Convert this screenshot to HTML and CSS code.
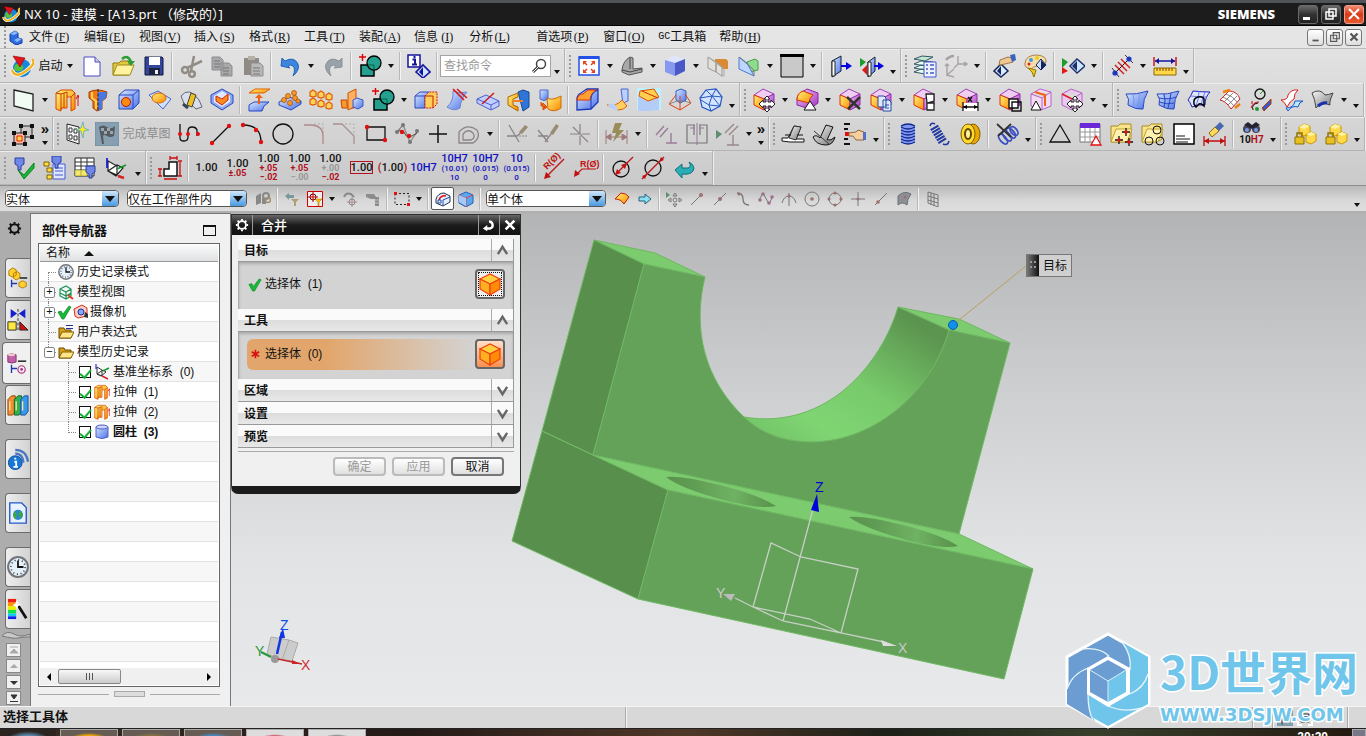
FILE: index.html
```html
<!DOCTYPE html>
<html lang="zh-CN">
<head>
<meta charset="utf-8">
<title>NX 10 - 建模</title>
<link rel="stylesheet" href="styles.css">
</head>
<body>
<svg class="defs" width="0" height="0" aria-hidden="true">
<defs>
<linearGradient id="gb" x1="0" y1="0" x2="1" y2="1"><stop offset="0" stop-color="#dbe9ff"/><stop offset="1" stop-color="#4a72e8"/></linearGradient>
<linearGradient id="go" x1="0" y1="0" x2="1" y2="1"><stop offset="0" stop-color="#fff27a"/><stop offset="1" stop-color="#ff8a00"/></linearGradient>
<linearGradient id="gp" x1="0" y1="0" x2="1" y2="1"><stop offset="0" stop-color="#f3c8f5"/><stop offset="1" stop-color="#a02cc0"/></linearGradient>
<linearGradient id="gg" x1="0" y1="0" x2="1" y2="1"><stop offset="0" stop-color="#f8f8f8"/><stop offset="1" stop-color="#777"/></linearGradient>
<linearGradient id="bore" x1="0" y1="1" x2="1" y2="0"><stop offset="0" stop-color="#6fbf63"/><stop offset=".25" stop-color="#80d573"/><stop offset=".5" stop-color="#78ca6b"/><stop offset=".85" stop-color="#5c954f"/><stop offset="1" stop-color="#5a924d"/></linearGradient>
<linearGradient id="hole" x1="0" x2="1"><stop offset="0" stop-color="#5a924d"/><stop offset=".2" stop-color="#5e9a52"/><stop offset=".62" stop-color="#6fb263"/><stop offset="1" stop-color="#579049"/></linearGradient>
</defs>
<symbol id="launch" viewBox="0 0 24 24"><circle cx="12" cy="14" r="9" fill="#1688dc"/><path d="M5 11q4-3 7 0t-1 6q-5 1-7-2z" fill="#55c33a"/><path d="M2 16q3 9 14 1t6-12" fill="none" stroke="#fff" stroke-width="4"/><path d="M2 16q3 9 14 1t6-12" fill="none" stroke="#f2b21d" stroke-width="2.4"/><path d="M3 2l12 2-5 9z" fill="#e2151c" stroke="#900" stroke-width=".6"/></symbol>
<symbol id="new" viewBox="0 0 24 24"><path d="M4 3h11l5 5v14H4z" fill="#fff" stroke="#4a4ac8"/><path d="M15 3v5h5" fill="#ccd" stroke="#4a4ac8"/></symbol>
<symbol id="open" viewBox="0 0 24 24"><path d="M2 9h6l2-2h8v14H2z" fill="#e3c93c" stroke="#8c7a10"/><path d="M2 21l4-10h17l-4 10z" fill="#fff3a0" stroke="#a08a1a"/><path d="M11 5q6-5 9 3" fill="none" stroke="#2c9c34" stroke-width="2.5"/><path d="M16 7h8l-4 5z" fill="#2c9c34"/></symbol>
<symbol id="save" viewBox="0 0 24 24"><path d="M3 3h17l1 1v17H3z" fill="#34459c" stroke="#10183c"/><path d="M7 3h11v8H7z" fill="#fff"/><path d="M7 14h11v7H7z" fill="#1b2240"/><path d="M13 16h3v4h-3z" fill="#eee"/></symbol>
<symbol id="cut" viewBox="0 0 24 24"><g fill="none" stroke="#928d84" stroke-width="2.5"><circle cx="6" cy="16" r="3"/><circle cx="13" cy="20" r="2.8"/><path d="M12 17L15 2M8 14l15-7"/></g></symbol>
<symbol id="copy" viewBox="0 0 24 24"><path d="M2 3h8l3 3v10H2zM11 9h8l3 3v10H11z" fill="#a9a8aa" stroke="#8d8b90"/><path d="M4 7h6M4 10h6M4 13h6M13 14h6M13 17h6M13 20h6" stroke="#777"/></symbol>
<symbol id="paste" viewBox="0 0 24 24"><path d="M3 4h15v17H3z" fill="#8f8b84"/><path d="M7 2h7v4H7z" fill="#b5b1a9"/><path d="M10 9h9l3 3v10H10z" fill="#b9b8b8" stroke="#8d8b90"/><path d="M12 14h7M12 17h7M12 20h7" stroke="#777"/></symbol>
<symbol id="undo" viewBox="0 0 24 24"><path d="M3 12l1-8 3 3q9-5 13 3 2 6-5 12 3-7 0-10-3-2-5 0l2 2z" fill="#3d86e0" stroke="#2463b5"/></symbol>
<symbol id="redo" viewBox="0 0 24 24"><path d="M21 13l0-9-3 3q-9-5-13 3-2 6 5 12-3-7 0-10 3-2 5 0l-2 2z" fill="#98a2a8" stroke="#8a9398"/></symbol>
<symbol id="bool" viewBox="0 0 24 24"><path d="M3 11h13v11H3z" fill="#24a08e" stroke="#000" stroke-width="1.5"/><circle cx="16" cy="9" r="7" fill="#24a08e" stroke="#000" stroke-width="1.3"/><path d="M10 11h6v5" fill="none" stroke="#064"/><path d="M1 3h7M4.500 0v7" stroke="#e00000" stroke-width="1.4"/></symbol>
<symbol id="info" viewBox="0 0 24 24"><path d="M1 1h12v12H1z" fill="#fff" stroke="#14149c" stroke-width="1.5"/><path d="M5.500 5.500H8V10M5 10.500h5M6.500 3h2" stroke="#14149c" stroke-width="2" fill="none"/><path d="M9 18l7-7 7 7-7 6z" fill="#cfe6ff" stroke="#14149c" stroke-width="1.6"/><path d="M16 13v9l-4-4z" fill="#14149c"/></symbol>
<symbol id="fit" viewBox="0 0 24 24"><path d="M2 3h20v18H2z" fill="#fff" stroke="#2350e8" stroke-width="1.500"/><path d="M2 2h20v3H2z" fill="#2350e8"/><path d="M7 8l3 3M17 8l-3 3M7 18l3-3M17 18l-3-3" stroke="#e8401c" stroke-width="1.500"/><g fill="#e8401c"><path d="M6 7h4l-4 4zM18 7h-4l4 4zM6 19h4l-4-4zM18 19h-4l4-4z"/></g></symbol>
<symbol id="persp" viewBox="0 0 24 24"><path d="M2 16q1-9 8-13l3 1v11l9-1v4l-13 3-7-3z" fill="#a8a8a8" stroke="#555"/><path d="M2 16l8 2 12-3M10 4v11" stroke="#444" fill="none"/></symbol>
<symbol id="cubeb" viewBox="0 0 24 24"><path d="M2 6l9-4 11 3-10 4z" fill="#dfe6ff"/><path d="M2 6l10 3v13L2 18z" fill="#8799ee"/><path d="M12 9l10-4v12l-10 5z" fill="#4a58c8"/></symbol>
<symbol id="clipo" viewBox="0 0 24 24"><path d="M9 5h11l2 2v8H9z" fill="#d98b34"/><path d="M2 3l8 5v10l-8-4zM10 8l6 5v9l-6-4z" fill="#e4e0da" stroke="#999"/><path d="M2 3l16 12v7h-3" fill="none" stroke="#aaa"/></symbol>
<symbol id="clipg" viewBox="0 0 24 24"><path d="M10 8l8-3 3 2v9l-8 2z" fill="#8fdc8f" stroke="#4a9c4a"/><path d="M2 3l8 6 7 13-15-7z" fill="#bcd6ff" stroke="#4a7bd0"/><path d="M2 3l15 13v6" fill="none" stroke="#777"/></symbol>
<symbol id="bgwin" viewBox="0 0 24 24"><path d="M1 1h22v22H1z" fill="#c9c9c9" stroke="#000"/><path d="M0 0h24v3H0z" fill="#000"/></symbol>
<symbol id="show" viewBox="0 0 24 24"><path d="M3 7l9-5v15l-9 6z" fill="url(#gb)" stroke="#123"/><path d="M3 7h3v15H3z" fill="#fff" stroke="#222"/><path d="M12 12h6" stroke="#0000e0" stroke-width="2"/><path d="M17 8l6 4-6 4z" fill="#0000e0"/></symbol>
<symbol id="showh" viewBox="0 0 24 24"><path d="M8 8l7-5v14l-7 6z" fill="url(#gb)" stroke="#123"/><path d="M8 8h3v14H8z" fill="#fff" stroke="#222"/><path d="M14 12h5" stroke="#0000e0" stroke-width="2"/><path d="M18 8l6 4-6 4z" fill="#0000e0"/><path d="M0 4l6 4-6 5z" fill="#1c9c2a"/><path d="M7 11v10l-5-5z" fill="#e01818"/></symbol>
<symbol id="layers" viewBox="0 0 24 24"><g fill="#e8fff0" stroke="#356"><path d="M1 18l7-3 12 1-8 4zM1 14l7-3 12 1-8 4zM1 10l7-3 12 1-8 4z"/><path d="M1 5l8-3 11 1-8 4z" fill="#bfe8cf"/></g><path d="M11 8h12v15H11z" fill="#eef2ff" stroke="#4458d0"/><path d="M13 11h2M13 15h2M13 19h2M17 11h4M17 15h4M17 19h4" stroke="#4458d0" stroke-width="1.500"/></symbol>
<symbol id="csysg" viewBox="0 0 24 24"><g fill="none" stroke="#aaa2a2" stroke-width="1.400"><path d="M14 2v8h9M14 10l-4 4M20 8l3 2-3 2M3 10v11l7-6M3 21l7 2M1 12l2-2 2 2"/><path d="M2 6q3-4 8-4" stroke-width="2.500"/></g></symbol>
<symbol id="objd" viewBox="0 0 24 24"><path d="M1 17l7-7 7 7-7 6z" fill="#d8ecff" stroke="#14245c" stroke-width="1.500"/><path d="M8 12v9l-4-4z" fill="#14245c"/><path d="M7 6l8-3 4 1 1 4-8 2-6 1z" fill="#f0c898" stroke="#a07838"/><path d="M17 1l5-1 1 6-4 2z" fill="#3464c0"/></symbol>
<symbol id="palette" viewBox="0 0 24 24"><path d="M1 9q1-8 12-8 10 1 9 7-3 6-9 4-4 1-6 3-7-1-6-6z" fill="#f7dcaa" stroke="#a8824a"/><circle cx="7" cy="6" r="2" fill="#3aa0d8"/><circle cx="13" cy="4" r="2" fill="#e8d020"/><circle cx="5" cy="10" r="1.500" fill="#d22"/><path d="M17 5l5 6-5 5-5-5z" fill="#cfe0ff" stroke="#14245c"/><path d="M17 6v10l5-5z" fill="#14245c"/><path d="M4 14l8 2-2 7-2-5z" fill="#f0cc20" stroke="#907800"/></symbol>
<symbol id="flagd" viewBox="0 0 24 24"><path d="M1 4l6 4-6 6z" fill="#1c9c2a"/><path d="M1 13v7l6-3z" fill="#e01818"/><path d="M9 12l7-7 8 7-8 7z" fill="#cfe6ff" stroke="#1a2f6c" stroke-width="1.400"/><path d="M16 7v10l-5-5z" fill="#1a2f6c"/></symbol>
<symbol id="meas" viewBox="0 0 24 24"><path d="M5 19L19 5" stroke="#111"/><path d="M5 11l9 9M8 8l9 9M11 5l9 9" stroke="#d01818" stroke-width="1.400"/><circle cx="5" cy="19" r="2.600" fill="#1838d8"/><circle cx="19" cy="5" r="2.600" fill="#1838d8"/><path d="M2 14l7 9M15 1l8 8" stroke="#335"/></symbol>
<symbol id="ruler" viewBox="0 0 24 24"><path d="M1 3v9M23 3v9" stroke="#d01818" stroke-width="1.500"/><path d="M2 7h20" stroke="#14149c" stroke-width="1.500"/><path d="M2 7l4-3v6zM22 7l-4-3v6z" fill="#14149c"/><path d="M1 14h22v7H1z" fill="#ffd84a" stroke="#8a6a00"/><path d="M4 14v3M7 14v3M10 14v3M13 14v3M16 14v3M19 14v3" stroke="#804000"/></symbol>
<symbol id="plane" viewBox="0 0 24 24"><path d="M2 2l19 4v17L2 18z" fill="#f2faf4" stroke="#222" stroke-width="1.300"/></symbol>
<symbol id="extr" viewBox="0 0 24 24"><path d="M1 5l5-3h11l3 3v16l-4 2V9h-4v11H6v3l-5-2z" fill="url(#go)" stroke="#d84800"/><path d="M6 6v16M9 5v15M12 9V4M16 9l4-4M1 5l5 1 3-1 3-1" stroke="#c04000" fill="none"/><path d="M23 8v10M21 11l2-4 1 3" stroke="#e01010" fill="none"/></symbol>
<symbol id="rev" viewBox="0 0 24 24"><path d="M3 4q8-4 18 0l-1 6-4 3v8l-5 2-4-3v-7L3 10z" fill="#f07818" stroke="#a83c00"/><path d="M12 4h9l-1 6-4 3v8l-4 2z" fill="#4a78e0"/><path d="M6 4v6l4 3v8" stroke="#ffd050" stroke-width="2" fill="none"/><path d="M12 1v22" stroke="#222" stroke-dasharray="3 1.500"/></symbol>
<symbol id="bhole" viewBox="0 0 24 24"><path d="M2 7l6-5h14v13l-6 6H2z" fill="url(#gb)" stroke="#2848c0"/><path d="M2 7h14v14M16 7l6-5" fill="none" stroke="#2848c0"/><circle cx="9" cy="14" r="4.500" fill="#ff8a10" stroke="#c01800"/></symbol>
<symbol id="emb" viewBox="0 0 24 24"><path d="M1 7l9-4 13 8-8 10z" fill="#cfe0ff" stroke="#4868c8"/><ellipse cx="11" cy="10" rx="7" ry="5" fill="url(#go)" stroke="#e06000"/></symbol>
<symbol id="thin" viewBox="0 0 24 24"><path d="M2 8q8-10 18 4l3 7-6 2q-5-6-11-3z" fill="#d8e0ee" stroke="#667"/><path d="M12 5l5 2-4 12-5-2z" fill="#f0c020" stroke="#444"/><path d="M4 16l5 4" stroke="#345" stroke-width="3"/></symbol>
<symbol id="boxo" viewBox="0 0 24 24"><path d="M1 7l11-6 11 6v8l-11 7-11-7z" fill="#8ea8f0" stroke="#2848c0"/><path d="M4 8l8-5 8 5v6l-8 5-8-5z" fill="#dfe8ff"/><path d="M6 8l6 3 6-5v6l-6 5-6-4z" fill="#ff8a20" stroke="#c82800"/></symbol>
<symbol id="lift" viewBox="0 0 24 24"><path d="M2 5l6-4h15l-6 4z" fill="url(#go)" stroke="#e06000"/><path d="M2 17l5-3h15l-5 4-2 5H2z" fill="url(#gb)" stroke="#2848c0"/><path d="M11 16v-6H8l4-4 4 4h-3v6z" fill="#f06010"/></symbol>
<symbol id="patd" viewBox="0 0 24 24"><path d="M1 14l10-5 12 4v3l-10 6L1 17z" fill="url(#gb)" stroke="#2848c0"/><g fill="#f59a28" stroke="#a84800" stroke-width=".7"><circle cx="6" cy="12" r="2.500"/><circle cx="12" cy="15" r="2.500"/><circle cx="17" cy="10" r="2.500"/><circle cx="10" cy="8" r="2.500"/><circle cx="16" cy="5" r="2.500"/><circle cx="20" cy="13" r="2"/></g></symbol>
<symbol id="patb" viewBox="0 0 24 24"><g fill="#ffd25a" stroke="#e05a00" stroke-width="1.200"><path d="M1 4l3-2 3 2v4l-3 1-3-1zM9 5l3-2 3 2v4l-3 1-3-1zM17 7l3-2 3 2v4l-3 1-3-1zM1 12l3-2 3 2v4l-3 1-3-1zM9 14l3-2 3 2v4l-3 1-3-1zM17 16l3-2 3 2v4l-3 1-3-1z"/></g></symbol>
<symbol id="mir" viewBox="0 0 24 24"><path d="M1 12h6v6l4 1v-6h5l-2 7H2z" fill="#ff9a28" stroke="#c04800"/><path d="M8 5l8-4v17l-8 4z" fill="#ffb060" stroke="#d05000"/><path d="M13 12l4-2 6 2v6l-5 3-5-2z" fill="url(#gb)" stroke="#3858c8"/></symbol>
<symbol id="comb" viewBox="0 0 24 24"><path d="M1 8l5-4h9v12l-4 4H1z" fill="url(#gb)" stroke="#2848c0"/><path d="M1 8h10v12" fill="none" stroke="#2848c0"/><path d="M11 8l4-4h8v12l-4 4h-8z" fill="#ffcf5a" stroke="#d01010" stroke-dasharray="2 1"/><path d="M11 8h8v12" fill="none" stroke="#c02000"/></symbol>
<symbol id="trim" viewBox="0 0 24 24"><path d="M8 3q6 3 14 1-6 6-7 16-6 4-13-1 7-6 6-16z" fill="url(#gb)" stroke="#6888d0"/><path d="M8 1l11 11M12 1l10 9" stroke="#d81818" stroke-width="1.600"/></symbol>
<symbol id="split" viewBox="0 0 24 24"><path d="M1 11l9-4 13 6v5l-8 4-14-7z" fill="#c2ceff" stroke="#4860d0"/><path d="M1 11l14 6 8-4M15 17v5" stroke="#4860d0" fill="none"/><path d="M6 16L18 5" stroke="#d01818" stroke-width="1.500"/></symbol>
<symbol id="arch" viewBox="0 0 24 24"><path d="M11 4l5-2 6 2v15l-6 4z" fill="#2f74d8" stroke="#184890"/><path d="M1 9l10-4v4l-5 2v6l5 2v4L1 17z" fill="url(#go)" stroke="#a86800"/><path d="M6 13h10" stroke="#f08020" stroke-width="2"/></symbol>
<symbol id="tube" viewBox="0 0 24 24"><path d="M2 2h8v9q-4 3-8 0z" fill="url(#gb)" stroke="#4868c8"/><path d="M9 10q5 3 14-2v12q-7 5-13 1z" fill="url(#go)" stroke="#d06800"/><path d="M3 14v4h4M5 15l4 4-4 3z" stroke="#e05000" fill="#e05000"/></symbol>
<symbol id="eb" viewBox="0 0 24 24"><path d="M2 10q1-4 4-5l6-4h11v13l-7 7-14 1z" fill="url(#gb)" stroke="#1c38b8" stroke-width="1.300"/><path d="M2 12q1-6 6-6l5-4h9q-6 2-7 10z" fill="#ffa030" stroke="#e03000"/><path d="M16 10v11M16 10q1-6 7-8" stroke="#1c38b8" fill="none"/></symbol>
<symbol id="fb" viewBox="0 0 24 24"><path d="M15 1h7v12q-2 0-5 3z" fill="#b8d0ff" stroke="#4868c8"/><path d="M1 17q9 2 15-5l5 6q-3 4-9 4z" fill="#ffd060" stroke="#e06000"/><path d="M1 17q4 0 7-2l4 7H8z" fill="#b8d0ff"/></symbol>
<symbol id="chm" viewBox="0 0 24 24"><path d="M0 0h24v22H0z" fill="#bff0ff"/><path d="M1 8l10 5v10H1zM11 13l11-3v12l-11 1z" fill="#b4ccf8"/><path d="M3 3l14-2 5 8-11 4-9-5z" fill="#ffd050" stroke="#e05000"/><path d="M5 3l16 7" stroke="#e02000"/></symbol>
<symbol id="drf" viewBox="0 0 24 24"><path d="M8 3l5-2 5 2v9l-6 3-4-3z" fill="url(#gb)" stroke="#3060c0"/><path d="M8 7L1 16l11 6 11-7-6-9M12 8v14" fill="none" stroke="#e04010"/><path d="M1 16l11-4 11 3" fill="none" stroke="#888"/></symbol>
<symbol id="ball" viewBox="0 0 24 24"><path d="M7 2l10-1 6 8-2 9-9 5-9-4-2-9z" fill="#d2e4ff" stroke="#2858c0" stroke-width="1.200"/><path d="M7 2l6 6 4-7M13 8l10 1M13 8L1 10M13 8l-3 9 2 6M10 17L2 12M10 17l11 1-8-10" fill="none" stroke="#2858c0"/></symbol>
<symbol id="pc" viewBox="0 0 24 24"><path d="M2 7l9-6 11 5-10 5z" fill="#f0cdf2" stroke="#a040b8"/><path d="M2 7l10 4v11L2 17z" fill="url(#go)" stroke="#e03000"/><path d="M12 11l10-5v11l-10 5z" fill="url(#gp)" stroke="#9030a8"/></symbol>
<symbol id="mv" viewBox="0 0 24 24"><path d="M15 8l3 3h-2v3h3v-2l4 4-4 4v-2h-3v3h2l-3 3-3-3h2v-3h-3v2l-4-4 4-4v2h3v-3h-2z" fill="#fff" stroke="#222"/></symbol>
<symbol id="s1" viewBox="0 0 24 24"><use href="#pc"/><use href="#mv"/></symbol>
<symbol id="s2" viewBox="0 0 24 24"><path d="M2 12q0-6 5-8l5-3 11 4v10l-8 6-13-4z" fill="url(#gp)" stroke="#8828a0"/><path d="M2 12q0-7 6-9l10 4q-4 3-4 8z" fill="url(#go)" stroke="#e03000"/><path d="M15 13l6 9H9z" fill="#fff" stroke="#111"/></symbol>
<symbol id="s3" viewBox="0 0 24 24"><use href="#pc"/><path d="M9 9l13 12M22 9L10 21" stroke="#333" stroke-width="2.500"/></symbol>
<symbol id="s4" viewBox="0 0 24 24"><use href="#pc"/><path d="M9 8h6l2 2v9H9zM14 12h6l2 2v9h-8z" fill="#dfe8ff" stroke="#224a9c"/><path d="M16 17h4M16 20h4" stroke="#224a9c"/></symbol>
<symbol id="s5" viewBox="0 0 24 24"><use href="#pc"/><path d="M14 6h8v7l-7 2zM15 15h7v7h-7z" fill="#fff" stroke="#222" stroke-width="1.300"/></symbol>
<symbol id="s6" viewBox="0 0 24 24"><use href="#pc"/><path d="M8 15h16v8H8z" fill="#fff"/><path d="M8 14v9M23 14v9M8 19h15M13 9l4 5M17 9l-4 5" stroke="#111" stroke-width="1.300"/><path d="M8 19l4-2v4zM23 19l-4-2v4z"/></symbol>
<symbol id="s7" viewBox="0 0 24 24"><use href="#pc"/><path d="M11 11h9v9h-9z" fill="#fff" stroke="#111" stroke-width="1.400"/><path d="M14 14h9v9h-9z" fill="none" stroke="#111" stroke-width="1.400"/></symbol>
<symbol id="s8" viewBox="0 0 24 24"><path d="M2 6l9-5 11 3v14l-10 4-10-4zM2 6l11 4 9-6M13 10v12" fill="#f2dcf4" stroke="#b860c8"/><path d="M6 4l10 3v11" stroke="#f06010" fill="none" stroke-width="2"/><path d="M7 13l5 9H2z" fill="#fff" stroke="#111"/></symbol>
<symbol id="s9" viewBox="0 0 24 24"><path d="M2 6l9-5 11 4v13l-10 4-10-5zM2 6l10 5 10-6M12 11v11" fill="#e8c8ec" stroke="#b860c8"/><path d="M2 6l10 5" stroke="#e02020" stroke-width="1.500"/><use href="#mv"/></symbol>
<symbol id="f1" viewBox="0 0 24 24"><path d="M1 6q10 1 22-3-5 8-5 18-7 1-15-4 2-6-2-11z" fill="url(#gb)" stroke="#2848c0"/><path d="M8 6q2 7 0 13M15 5q-1 8-3 15" stroke="#7898e8" fill="none"/></symbol>
<symbol id="f2" viewBox="0 0 24 24"><use href="#f1"/><path d="M3 10q10 2 17-1M3 14q8 3 15 1M8 6q2 7 0 13M15 5q-1 8-3 15" stroke="#2848c0" fill="none"/></symbol>
<symbol id="f3" viewBox="0 0 24 24"><path d="M6 3q9 1 17 1-5 5-5 13-7-1-13 2-2-5-4-7 3-4 5-9z" fill="#dfe6ff" stroke="#2020c0"/><path d="M12 3q0 8-3 15M18 4q-3 7-4 14M4 8q8 1 16 1" stroke="#6a7ae0" fill="none"/><path d="M7 16q-1-6 4-7t6 2v7q-3-3-5-2l-3 3z" fill="none" stroke="#000" stroke-width="1.500"/></symbol>
<symbol id="f4" viewBox="0 0 24 24"><path d="M2 12l9-9q8 0 11 8l-9 10q-5-8-11-9z" fill="#fff" stroke="#d02020"/><path d="M5 9q6 2 11 9M8 6q7 2 11 8M6 14l9-9M10 17l9-9" stroke="#888" fill="none"/><path d="M5 4l7-2M17 20l5-4" stroke="#f08010" stroke-width="2.500"/></symbol>
<symbol id="f5" viewBox="0 0 24 24"><circle cx="11" cy="6" r="5" fill="none" stroke="#111" stroke-width="1.300"/><path d="M11 6l3-3" stroke="#1a1"/><path d="M2 20q2-6 8-6M3 13v3" stroke="#d00" fill="none"/><path d="M4 22q-2-6 5-7" stroke="#111" fill="none"/><circle cx="8" cy="21" r="2" fill="#1c9c2a"/><path d="M13 20l9-9v5l-7 7z" fill="#3858d0" stroke="#b04000"/></symbol>
<symbol id="f6" viewBox="0 0 24 24"><path d="M1 12q7 0 7-5 3-6 10-5-4 3-4 9-4 2-7 8-2-5-6-7z" fill="#fff" stroke="#d82020"/><path d="M6 20q8 0 9-7h8q-4 1-5 6-6-2-10 4z" fill="#b8ecff" stroke="#2050c8"/></symbol>
<symbol id="f7" viewBox="0 0 24 24"><path d="M1 5q8-5 13 2 3 0 8-2-4 9-3 12-9-4-14 3-1-9-4-15z" fill="url(#gg)" stroke="#444"/><path d="M7 18q5-4 9-3" stroke="#1830b0" stroke-width="3"/></symbol>
<symbol id="asm" viewBox="0 0 24 24"><path d="M9 4h11v11H9z" fill="#c8c8c8" stroke="#222"/><path d="M2 11h11v11H2z" fill="#ffb8a8" stroke="#222"/><path d="M5 14h5v5H5z" fill="#ffd84a" stroke="#e02000"/><g fill="#111"><path d="M7 2h4v4H7zM18 2h4v4h-4zM18 13h4v4h-4zM0 9h4v4H0zM11 9h4v4h-4zM0 20h4v4H0zM11 20h4v4h-4z"/></g></symbol>
<symbol id="skt" viewBox="0 0 24 24"><path d="M2 2l12 3v17L2 18z" fill="#f4f4f4" stroke="#222"/><path d="M4 6h3v4H4zM9 7h3v4H9zM4 13h3v4H4zM9 14h3v4H9z" fill="#fff" stroke="#333"/><path d="M18 0l1 6 5 2-5 1-1 7-2-7-5-1 5-2z" fill="#ffe820" stroke="#38a8d8" stroke-width=".7"/></symbol>
<symbol id="flag" viewBox="0 0 24 24"><path d="M0 0h24v24H0z" fill="#86a0b2" stroke="#6e8ca0"/><path d="M4 5q4-3 8 0t8-1l-1 10q-4 2-7 0t-4 0l1 8H7z" fill="#555b60"/><path d="M6 6h3v3H6zM12 6h3v3h-3zM9 9h3v3H9zM15 9h3v3h-3z" fill="#9ba6ad"/></symbol>
<symbol id="prof" viewBox="0 0 24 24"><path d="M2 2v14q0 3 4 3t4-4V9q0-4 4-4t5 3v6" fill="none" stroke="#111" stroke-width="1.300"/><g fill="#e01010"><circle cx="2" cy="12" r="2"/><circle cx="10" cy="12" r="2"/><circle cx="20" cy="12" r="2"/></g></symbol>
<symbol id="line" viewBox="0 0 24 24"><path d="M3 21L20 4" stroke="#111" stroke-width="1.300"/><circle cx="3" cy="21" r="2.200" fill="#e01010"/><circle cx="20" cy="4" r="2.200" fill="#e01010"/></symbol>
<symbol id="arc" viewBox="0 0 24 24"><path d="M3 3q18 0 18 17" stroke="#111" stroke-width="1.300" fill="none"/><circle cx="3" cy="3" r="2.200" fill="#e01010"/><circle cx="16" cy="8" r="2.200" fill="#e01010"/><circle cx="21" cy="20" r="2.200" fill="#e01010"/></symbol>
<symbol id="circ" viewBox="0 0 24 24"><circle cx="12" cy="12" r="10" fill="none" stroke="#111" stroke-width="1.300"/></symbol>
<symbol id="fil" viewBox="0 0 24 24"><path d="M12 2h9v10" fill="none" stroke="#aaa" stroke-dasharray="2 2"/><path d="M2 3h8q11 1 11 11v8" fill="none" stroke="#b08a8a" stroke-width="1.300"/></symbol>
<symbol id="cha" viewBox="0 0 24 24"><path d="M12 2h9v10" fill="none" stroke="#aaa" stroke-dasharray="2 2"/><path d="M0 2h9l12 12v8" fill="none" stroke="#a89090" stroke-width="1.300"/></symbol>
<symbol id="rect" viewBox="0 0 24 24"><path d="M3 5h18v13H3z" stroke="#111" stroke-width="1.300" fill="none"/><circle cx="3" cy="5" r="2.200" fill="#e01010"/><circle cx="21" cy="18" r="2.200" fill="#e01010"/></symbol>
<symbol id="spl" viewBox="0 0 24 24"><path d="M2 10L8 3l7 17 7-10" stroke="#888" stroke-width="1.300" fill="none"/><path d="M2 10q6-4 8 2t12-1" stroke="#444" fill="none"/><g fill="#777"><circle cx="2" cy="10" r="2"/><circle cx="8" cy="3" r="2"/><circle cx="15" cy="20" r="2"/><circle cx="22" cy="9" r="2"/></g><circle cx="7" cy="10" r="2.200" fill="#e01010"/><circle cx="14" cy="14" r="2.200" fill="#e01010"/></symbol>
<symbol id="plus" viewBox="0 0 24 24"><path d="M3 12h18M12 3v18" stroke="#111" stroke-width="1.500"/></symbol>
<symbol id="offs" viewBox="0 0 24 24"><path d="M2 21V10q8-9 18-2 4 8-4 13zM6 18v-6q5-6 10-1 3 5-2 7z" fill="none" stroke="#8c8484" stroke-width="1.300"/></symbol>
<symbol id="tr1" viewBox="0 0 24 24"><path d="M3 3l10 17M1 14h10l10-9" fill="none" stroke="#8c8484" stroke-width="1.300"/><path d="M13 14h9" stroke="#888" stroke-dasharray="2 1"/><path d="M13 10l6-7 3 2-6 7z" fill="#9a8c70"/></symbol>
<symbol id="tr2" viewBox="0 0 24 24"><path d="M1 8l10 12M1 14h10M8 20L20 4" fill="none" stroke="#8c8484" stroke-width="1.300"/><path d="M13 11l6-9 3 2-6 9z" fill="#9a8c70"/></symbol>
<symbol id="tr3" viewBox="0 0 24 24"><path d="M2 12h10l8 8M12 12V2M12 12L5 5M14 12h8M12 14v9" fill="none" stroke="#8c8484" stroke-width="1.200"/></symbol>
<symbol id="adim" viewBox="0 0 24 24"><path d="M1 8v14M22 8v14M2 15h19M1 15l5-3v6zM22 15l-5-3v6z" stroke="#a07878" fill="#a07878"/><path d="M10 1h7l-3 7h5L8 20l3-9H7z" fill="#988c58"/></symbol>
<symbol id="cons" viewBox="0 0 24 24"><path d="M2 13l8-9M6 15l8-9M12 21h11M17 11v10" stroke="#9a7c98" stroke-width="1.400" fill="none"/></symbol>
<symbol id="sym" viewBox="0 0 24 24"><path d="M10 3H2v18h20V3h-8M9 3v10M15 3v10" fill="none" stroke="#777" stroke-width="1.200"/><path d="M12 1v22M5 6h5M14 6h5" stroke="#947898"/></symbol>
<symbol id="dcon" viewBox="0 0 24 24"><path d="M0 8l6 4-6 5z" fill="#5c9070"/><path d="M9 11l9-9M13 13l9-9M11 23h12M17 13v10" stroke="#988888" stroke-width="1.400"/></symbol>
<symbol id="pr1" viewBox="0 0 24 24"><path d="M1 16h6l6-12 7 1-5 12h8v3H9l-8-1z" fill="#fff" stroke="#111"/><path d="M8 16l5-12 7 1-5 13z" fill="url(#gg)" stroke="#333"/><path d="M4 13h6M16 13h6" stroke="#111"/></symbol>
<symbol id="pr2" viewBox="0 0 24 24"><path d="M1 15q3-3 7 1l6-13 7 2-6 13q4 1 8-3-2 8-9 8Q4 23 1 15z" fill="url(#gg)" stroke="#111"/><path d="M2 9l15 13" stroke="#333"/></symbol>
<symbol id="hand" viewBox="0 0 24 24"><path d="M1 2h6M1 7h4M1 17h4M1 22h6" stroke="#111" stroke-width="2"/><path d="M2 10h4v4H2z" fill="#e01010"/><path d="M6 11l7-1 2-2 6 2v8h-8l-3-4H6z" fill="#f4cfa0" stroke="#906838"/><path d="M20 10h3v8h-3z" fill="#5070d0"/></symbol>
<symbol id="sp1" viewBox="0 0 24 24"><path d="M5 4q7-4 14 0v16q-7 4-14 0z" fill="#8098f0"/><path d="M5 5q7 4 14 0M5 8q7 4 14 0M5 11q7 4 14 0M5 14q7 4 14 0M5 17q7 4 14 0M5 20q7 4 14 0M5 4q7-4 14 0" fill="none" stroke="#102890" stroke-width="1.400"/></symbol>
<symbol id="sp2" viewBox="0 0 24 24"><path d="M7 5l9 15" stroke="#2038a0" stroke-width="9" stroke-dasharray="2 1"/><path d="M3 4q1-4 5-2M16 22q5 2 6-3" fill="none" stroke="#2038a0" stroke-width="1.500"/></symbol>
<symbol id="ring" viewBox="0 0 24 24"><ellipse cx="15" cy="12" rx="7" ry="10" fill="#e8a800" stroke="#806000"/><ellipse cx="10" cy="12" rx="7" ry="10" fill="#ffd830" stroke="#806000"/><ellipse cx="10" cy="12" rx="3" ry="5" fill="#fff0a0" stroke="#604800" stroke-width="2"/></symbol>
<symbol id="spx" viewBox="0 0 24 24"><g fill="none" stroke="#3a50c0" stroke-width="1.800"><ellipse cx="8" cy="17" rx="3" ry="6" transform="rotate(-40 8 17)"/><ellipse cx="12" cy="14" rx="3" ry="6" transform="rotate(-40 12 14)"/><ellipse cx="16" cy="11" rx="3" ry="6" transform="rotate(-40 16 11)"/><ellipse cx="19" cy="9" rx="3" ry="5" transform="rotate(-40 19 9)"/></g><path d="M2 2l14 13M16 2L3 14" stroke="#333" stroke-width="1.800"/></symbol>
<symbol id="tri" viewBox="0 0 24 24"><path d="M12 3l10 17H2z" fill="none" stroke="#111" stroke-width="1.300"/></symbol>
<symbol id="tab" viewBox="0 0 24 24"><path d="M1 2h20v18H1z" fill="#fff" stroke="#777"/><path d="M1 1h20v5H1z" fill="#6a28d8"/><path d="M1 10h20M1 15h20M6 6v14M11 6v14M16 6v14" stroke="#999"/><path d="M17 14l5 9h-10z" fill="#fff" stroke="#e01010" stroke-width="1.300"/></symbol>
<symbol id="fol" viewBox="0 0 24 24"><path d="M1 4h7l2-2h11v15l-5 3H1z" fill="#f8e48a" stroke="#a88c20"/><path d="M1 20L6 7h16l-5 13z" fill="#fff2b0" stroke="#c0a030"/></symbol>
<symbol id="folp" viewBox="0 0 24 24"><use href="#fol"/><path d="M12 10h8M16 6v8M5 18h8M9 14v8M15 20h8M19 16v8" stroke="#111" stroke-width="1.300"/><g fill="#e01010"><circle cx="16" cy="10" r="1.800"/><circle cx="9" cy="18" r="1.800"/><circle cx="19" cy="20" r="1.800"/></g></symbol>
<symbol id="folo" viewBox="0 0 24 24"><use href="#fol"/><g fill="none" stroke="#111"><circle cx="16" cy="8" r="4"/><circle cx="8" cy="19" r="4"/><circle cx="19" cy="19" r="4"/></g></symbol>
<symbol id="note" viewBox="0 0 24 24"><path d="M2 2h20v20H2z" fill="#fff" stroke="#000" stroke-width="1.500"/><path d="M4 14h9M4 17h14M4 20h12" stroke="#111"/></symbol>
<symbol id="brush" viewBox="0 0 24 24"><path d="M1 14v10M22 14v10M1 19h21" stroke="#c01010" stroke-width="1.300"/><path d="M1 19l5-3v6zM22 19l-5-3v6z" fill="#c01010"/><path d="M6 11l6-6 4 4-7 6z" fill="#ffd860" stroke="#906a00"/><path d="M12 5l5-5 4 4-5 5z" fill="#4868b0"/></symbol>
<symbol id="bin" viewBox="0 0 24 24"><circle cx="7" cy="7" r="4" fill="#445"/><circle cx="16" cy="7" r="4" fill="#445"/><path d="M4 3l4-3 4 3 4-3 4 3-8 4z" fill="#223"/><circle cx="7" cy="8" r="2" fill="#7898e8"/><circle cx="16" cy="8" r="2" fill="#7898e8"/></symbol>
<symbol id="gold" viewBox="0 0 24 24"><g fill="#ffd94a" stroke="#c89800"><path d="M6 5l5-3 6 2v8l-6 2-5-2zM13 12l5-2 5 2v7l-5 3-5-2z"/></g><path d="M6 5l5 2 6-3-6-2zM13 12l5 2 5-2-5-2z" fill="#fff3a8"/><path d="M2 15h9v7H2z" fill="#e8c020" stroke="#907000"/><path d="M4 15v-4h5v4" fill="none" stroke="#907000" stroke-width="1.500"/></symbol>
<symbol id="pin" viewBox="0 0 24 24"><path d="M3 2h9v6l-3 2v4H6v-4L3 8z" fill="#6f88e8" stroke="#2a3c9c"/></symbol>
<symbol id="chk" viewBox="0 0 24 24"><use href="#pin"/><path d="M6 14l6 5L22 7v5L12 23z" fill="#18b838" stroke="#0c8020"/></symbol>
<symbol id="tl" viewBox="0 0 24 24"><path d="M10 8h12v15H10z" fill="#dfe6ff" stroke="#4458d0"/><path d="M12 12h8M12 15h8M12 19h8" stroke="#4458d0"/><path d="M1 6h5v4H1zM4 12h5v4H4zM4 19h5v4H4z" fill="#ffe040" stroke="#806000"/><g transform="translate(6 -2)"><use href="#pin" width="24" height="24"/></g></symbol>
<symbol id="tp" viewBox="0 0 24 24"><path d="M1 2h19v18H1z" fill="#fff" stroke="#222"/><path d="M1 6h19M1 10h19M1 14h19M7 2v18M13 2v18" stroke="#333"/><path d="M1 14h12v6H1z" fill="#f0e030" opacity=".7"/><g transform="translate(9 8)"><use href="#pin" width="24" height="24"/></g></symbol>
<symbol id="cs3" viewBox="0 0 24 24"><path d="M3 5l9 5v9l-9-4zM3 15l9-6 6 3-7 8z" fill="#fff" stroke="#222" stroke-width="1.200"/><path d="M2 2v10" stroke="#0010d8" stroke-width="1.600"/><path d="M12 13l9-4" stroke="#109828" stroke-width="1.600"/><path d="M13 20l6 2" stroke="#d82020" stroke-width="2.500"/></symbol>
<symbol id="lsh" viewBox="0 0 24 24"><path d="M6 20v-7h5V6h8v14z" fill="#fff" stroke="#111" stroke-width="1.500"/><path d="M12 2h7M12 0v4M19 0v4M22 6v14M20 5h4M20 20h4M2 13v7M0 13h4M0 20h4M6 23h13" stroke="#c81010" stroke-width="1.300"/></symbol>
<symbol id="r1" viewBox="0 0 24 24"><path d="M22 3L5 20" stroke="#c01010" stroke-width="1.200"/><path d="M2 23l2-7 5 5z" fill="#c01010"/></symbol>
<symbol id="r2" viewBox="0 0 24 24"><path d="M3 19l6-6h14" stroke="#c01010" stroke-width="1.200" fill="none"/><path d="M1 21l1-7 5 4z" fill="#c01010"/></symbol>
<symbol id="d1" viewBox="0 0 24 24"><circle cx="11" cy="13" r="8" fill="none" stroke="#111" stroke-width="1.300"/><path d="M5 19L23 1" stroke="#c01010" stroke-width="1.300"/><path d="M5 19l2-6 4 4zM17 7l-2 6-4-4z" fill="#c01010"/></symbol>
<symbol id="d2" viewBox="0 0 24 24"><circle cx="12" cy="12" r="8" fill="none" stroke="#111" stroke-width="1.300"/><path d="M1 23L23 1" stroke="#c01010" stroke-width="1.300"/><path d="M6 18l-2 5-3-3zM18 6l2-5 3 3z" fill="#c01010"/></symbol>
<symbol id="teal" viewBox="0 0 24 24"><path d="M3 14l7-6v4h6q4-1 1-6 7 4 4 9-3 4-11 3v4z" fill="#28aeb4" stroke="#107078"/></symbol>
<symbol id="gear" viewBox="0 0 16 16"><circle cx="8" cy="8" r="4.500" fill="none" stroke="currentColor" stroke-width="2"/><path d="M8 1v2M8 13v2M1 8h2M13 8h2M3 3l2 2M11 11l2 2M3 13l2-2M11 5l2-2" stroke="currentColor" stroke-width="2.200"/></symbol>
<symbol id="q1" viewBox="0 0 16 16"><path d="M1 5l5-3v10l-5 2zM7 7h4v6H7z" fill="#888"/><circle cx="11" cy="5" r="3" fill="none" stroke="#888" stroke-width="2"/><circle cx="13" cy="9" r="2.500" fill="none" stroke="#9a9270" stroke-width="1.500"/></symbol>
<symbol id="q2" viewBox="0 0 16 16"><path d="M1 5l4-3v2h5v3H5v2z" fill="#799"/><path d="M7 8h8l-3 3v4h-2v-4z" fill="#b0a070"/></symbol>
<symbol id="q3" viewBox="0 0 16 16"><path d="M.5.500h15v15H.5z" fill="#eee" stroke="#d00000"/><circle cx="6" cy="6" r="3" fill="none" stroke="#600"/><path d="M6 1v10M1 6h10" stroke="#c00"/><path d="M8 8h7l-3 3v4h-1v-4z" fill="#ffc000" stroke="#a06000" stroke-width=".5"/></symbol>
<symbol id="q4" viewBox="0 0 16 16"><path d="M2 6q2-5 7-3l3 3" fill="none" stroke="#888" stroke-width="2"/><circle cx="10" cy="11" r="3" fill="none" stroke="#888"/><path d="M10 6v10M5 11h10" stroke="#a88"/></symbol>
<symbol id="q5" viewBox="0 0 16 16"><path d="M1 3h8l2 3h3v9h-4V8H6L1 6z" fill="#8c8c8c"/><path d="M10 9h4M10 12h4" stroke="#bbb"/></symbol>
<symbol id="q6" viewBox="0 0 16 16"><path d="M1 2.500h14v11H1z" fill="none" stroke="#222" stroke-dasharray="2 2"/><path d="M0 1h3v3H0zM13 12h3v3h-3z" fill="#e01010"/></symbol>
<symbol id="q7" viewBox="0 0 16 16"><path d="M1 8q2-6 8-6l6 3v6l-7 4-7-3z" fill="#e4ecff" stroke="#234"/><path d="M4 9q2-5 7-4" stroke="#e01010" stroke-width="1.500" fill="none"/><path d="M8 9l7-3M8 9v5M3 9h3v3H3z" stroke="#2850a8" fill="none"/></symbol>
<symbol id="q8" viewBox="0 0 16 16"><path d="M1 4l7-3 7 3v8l-7 4-7-4z" fill="#58a8f0" stroke="#2860b8"/><path d="M1 4l7 3v9M8 7l7-3" fill="none" stroke="#e04040"/><path d="M1 4l7 3v8l-7-4z" fill="#a8c8f8"/></symbol>
<symbol id="q9" viewBox="0 0 16 16"><path d="M1 8l6-6q5 0 8 4l-5 7q-3-5-9-5z" fill="url(#go)" stroke="#c02000"/></symbol>
<symbol id="q10" viewBox="0 0 16 16"><path d="M2 6h6V3l6 5-6 5v-3H2z" fill="#8ce0f0" stroke="#206080"/></symbol>
<symbol id="p1" viewBox="0 0 16 16"><path d="M0 1l4 3-4 3z" fill="#5a9070"/><g fill="none" stroke="#777"><circle cx="9" cy="9" r="2"/><path d="M9 2l2 3H7zM9 16l2-3H7zM2 9l3-2v4zM16 9l-3-2v4z"/></g></symbol>
<symbol id="p2" viewBox="0 0 16 16"><path d="M2 14L13 3" stroke="#777"/><circle cx="12" cy="4" r="2" fill="#a07070"/></symbol>
<symbol id="p3" viewBox="0 0 16 16"><path d="M2 14L14 2" stroke="#777"/><circle cx="8" cy="8" r="2" fill="#a07070"/></symbol>
<symbol id="p4" viewBox="0 0 16 16"><path d="M2 2q6 0 6 6t6 6" fill="none" stroke="#777" stroke-width="1.300"/><circle cx="4" cy="3" r="1.500" fill="#a07070"/></symbol>
<symbol id="p5" viewBox="0 0 16 16"><path d="M1 9l4-7 6 11 4-8" fill="none" stroke="#777"/><g fill="#a07090"><circle cx="2" cy="9" r="1.800"/><circle cx="5" cy="3" r="1.800"/><circle cx="11" cy="12" r="1.800"/><circle cx="14" cy="6" r="1.800"/></g></symbol>
<symbol id="p6" viewBox="0 0 16 16"><path d="M8 2v13M1 12q2-7 7-7t7 7" fill="none" stroke="#777"/><circle cx="8" cy="5" r="1.500" fill="#a07070"/></symbol>
<symbol id="p7" viewBox="0 0 16 16"><circle cx="8" cy="8" r="7" fill="none" stroke="#777"/><circle cx="8" cy="8" r="1.800" fill="#a07070"/></symbol>
<symbol id="p8" viewBox="0 0 16 16"><circle cx="8" cy="8" r="6" fill="none" stroke="#777"/><g fill="#a07070"><circle cx="8" cy="2" r="1.600"/><circle cx="8" cy="14" r="1.600"/><circle cx="2" cy="8" r="1.600"/><circle cx="14" cy="8" r="1.600"/></g></symbol>
<symbol id="p9" viewBox="0 0 16 16"><path d="M1 8h14M8 1v14" stroke="#777"/><circle cx="8" cy="8" r="1.500" fill="#a07070"/></symbol>
<symbol id="p10" viewBox="0 0 16 16"><path d="M2 14L14 2" stroke="#777"/><circle cx="5" cy="11" r="1.800" fill="#a07070"/></symbol>
<symbol id="p11" viewBox="0 0 16 16"><path d="M2 5q6-6 13-2-4 5-4 11-5-4-9 0z" fill="#8c9096" stroke="#6c7076"/><circle cx="9" cy="6" r="1.500" fill="#a07070"/></symbol>
<symbol id="p12" viewBox="0 0 16 16"><path d="M3 1l10 3v12L3 12zM6 2v12M9 3v12M3 5l10 3M3 9l10 3" fill="none" stroke="#777"/></symbol>
<symbol id="clock" viewBox="0 0 20 20"><circle cx="10" cy="10" r="9" fill="#e6f0f8" stroke="#707478" stroke-width="1.800"/><circle cx="10" cy="10" r="6.500" fill="none" stroke="#345" stroke-dasharray="1 2.400" stroke-width="1.500"/><path d="M10 4v6h5" fill="none" stroke="#111" stroke-width="1.600"/></symbol>
<symbol id="tick" viewBox="0 0 16 16"><path d="M2 8l3-1 2 3 6-8 2 1-7 12H6z" fill="#18b838" stroke="#0a8a22" stroke-width=".7"/></symbol>
<symbol id="fopen" viewBox="0 0 16 16"><path d="M1 4h5l1 2h6v8H1z" fill="#d8a018" stroke="#6c4c00"/><path d="M1 14l3-6h12l-3 6z" fill="#ffe48a" stroke="#805c00"/></symbol>
<symbol id="ocube" viewBox="0 0 24 24"><path d="M2 7l10-5 10 5-10 5z" fill="#ffd040" stroke="#f04010" stroke-width="1.200"/><path d="M2 7l10 5v11L2 17z" fill="#ffb020" stroke="#f04010" stroke-width="1.200"/><path d="M12 12l10-5v10l-10 6z" fill="#ff8c08" stroke="#f04010" stroke-width="1.200"/></symbol>
<symbol id="cyl" viewBox="0 0 16 16"><path d="M2 3q6-3 12 0v10q-6 3-12 0z" fill="url(#gb)" stroke="#5060c0"/><ellipse cx="8" cy="3" rx="6" ry="2" fill="#cdd4ff" stroke="#5060c0"/></symbol>
</svg>

<header class="title">
  <svg class="i20"><use href="#launch"/></svg>
  <h1>NX 10 - 建模 - [A13.prt （修改的）]</h1>
  <strong>SIEMENS</strong>
  <button class="w" aria-label="最小化"><svg viewBox="0 0 16 16"><path d="M3 11h7v3H3z" fill="#fff"/></svg></button>
  <button class="w" aria-label="还原"><svg viewBox="0 0 16 16"><path d="M6 3h7v7H6zM3 6h7v7H3z" fill="#444" stroke="#fff" stroke-width="1.500"/></svg></button>
  <button class="w red" aria-label="关闭"><svg viewBox="0 0 16 16"><path d="M3 3l10 10M13 3L3 13" stroke="#fff" stroke-width="2"/></svg></button>
</header>

<nav class="menu">
  <i class="grip"></i>
  <svg class="i16" viewBox="0 0 16 16"><path d="M2 5l5-3 3 2v5l4 1v4l-6 2-6-4z" fill="#2c6ce0" stroke="#173c98"/><path d="M2 5l5-3 3 2-4 2zM6 11l4-2 4 1-5 3z" fill="#8ab8ff"/></svg>
  <a href="#">文件<span>(<u>F</u>)</span></a><a href="#">编辑<span>(<u>E</u>)</span></a><a href="#">视图<span>(<u>V</u>)</span></a><a href="#">插入<span>(<u>S</u>)</span></a><a href="#">格式<span>(<u>R</u>)</span></a><a href="#">工具<span>(<u>T</u>)</span></a><a href="#">装配<span>(<u>A</u>)</span></a><a href="#">信息<span>(<u>I</u>)</span></a><a href="#" class="far">分析<span>(<u>L</u>)</span></a><a href="#">首选项<span>(<u>P</u>)</span></a><a href="#">窗口<span>(<u>O</u>)</span></a><a href="#"><span class="gc">GC</span>工具箱</a><a href="#">帮助<span>(<u>H</u>)</span></a>
  <div class="mdi">
    <button aria-label="最小化子窗口"><svg viewBox="0 0 16 16"><path d="M4 11h7v2H4z" fill="#555"/></svg></button>
    <button aria-label="还原子窗口"><svg viewBox="0 0 16 16"><path d="M6 3h7v7H6zM3 6h7v7H3z" fill="#eee" stroke="#555" stroke-width="1.300"/></svg></button>
    <button aria-label="关闭子窗口"><svg viewBox="0 0 16 16"><path d="M4 4l8 8M12 4l-8 8" stroke="#555" stroke-width="2.500"/></svg></button>
  </div>
</nav>

<div class="bars">
<div class="row">
  <div class="tb"><i class="grip"></i>
    <button class="b start"><svg><use href="#launch"/></svg>启动</button><button class="d" aria-label="启动菜单"></button>
    <button class="b" aria-label="新建"><svg><use href="#new"/></svg></button><button class="b" aria-label="打开"><svg><use href="#open"/></svg></button><button class="b" aria-label="保存"><svg><use href="#save"/></svg></button><i class="s"></i>
    <button class="b" aria-label="剪切"><svg><use href="#cut"/></svg></button><button class="b" aria-label="复制"><svg><use href="#copy"/></svg></button><button class="b" aria-label="粘贴"><svg><use href="#paste"/></svg></button><i class="s"></i>
    <button class="b" aria-label="撤消"><svg><use href="#undo"/></svg></button><button class="d" aria-label="撤消列表"></button><button class="b" aria-label="重做"><svg><use href="#redo"/></svg></button><i class="s"></i>
    <button class="b" aria-label="布尔"><svg><use href="#bool"/></svg></button><button class="d" aria-label="更多布尔"></button><i class="s"></i>
    <button class="b" aria-label="命令信息"><svg><use href="#info"/></svg></button><i class="s"></i>
    <label class="find"><input type="text" placeholder="查找命令" aria-label="查找命令"><svg viewBox="0 0 16 16"><circle cx="10" cy="6" r="4.500" fill="#fff" stroke="#444" stroke-width="1.500"/><path d="M7 9l-5 5" stroke="#444" stroke-width="3"/><path d="M7 9l-5 5" stroke="#eee"/></svg></label><button class="d low" aria-label="工具栏选项"></button>
  </div>
  <div class="tb"><i class="grip"></i>
    <button class="b" aria-label="适合窗口"><svg><use href="#fit"/></svg></button><button class="d" aria-label="更多"></button><button class="b" aria-label="透视"><svg><use href="#persp"/></svg></button><button class="d" aria-label="更多"></button><button class="b" aria-label="着色"><svg><use href="#cubeb"/></svg></button><button class="d" aria-label="更多"></button><button class="b" aria-label="剪切截面"><svg><use href="#clipo"/></svg></button><button class="b" aria-label="编辑截面"><svg><use href="#clipg"/></svg></button><button class="d" aria-label="更多"></button><button class="b" aria-label="背景"><svg><use href="#bgwin"/></svg></button><button class="d" aria-label="更多"></button><i class="s"></i>
    <button class="b" aria-label="显示"><svg><use href="#show"/></svg></button><button class="b" aria-label="显示和隐藏"><svg><use href="#showh"/></svg></button><button class="d low" aria-label="工具栏选项"></button>
  </div>
  <div class="tb"><i class="grip"></i>
    <button class="b" aria-label="图层"><svg><use href="#layers"/></svg></button><button class="b" aria-label="坐标系"><svg><use href="#csysg"/></svg></button><button class="d" aria-label="更多"></button><i class="s"></i>
    <button class="b" aria-label="对象显示"><svg><use href="#objd"/></svg></button><button class="b" aria-label="调色板"><svg><use href="#palette"/></svg></button><i class="s"></i><button class="b" aria-label="显示切换"><svg><use href="#flagd"/></svg></button><button class="d" aria-label="更多"></button><i class="s"></i>
    <button class="b" aria-label="测量距离"><svg><use href="#meas"/></svg></button><button class="d" aria-label="更多"></button><button class="b" aria-label="尺"><svg><use href="#ruler"/></svg></button><button class="d low" aria-label="工具栏选项"></button>
  </div>
</div>

<div class="row">
  <div class="tb"><i class="grip"></i>
    <button class="b" aria-label="基准平面"><svg><use href="#plane"/></svg></button><button class="d" aria-label="更多"></button><button class="b" aria-label="拉伸"><svg><use href="#extr"/></svg></button><button class="b" aria-label="旋转"><svg><use href="#rev"/></svg></button><button class="b" aria-label="孔"><svg><use href="#bhole"/></svg></button><button class="b" aria-label="凸起"><svg><use href="#emb"/></svg></button><button class="b" aria-label="扫掠"><svg><use href="#thin"/></svg></button><button class="b" aria-label="壳体"><svg><use href="#boxo"/></svg></button><i class="s"></i>
    <button class="b" aria-label="抽取"><svg><use href="#lift"/></svg></button><button class="b" aria-label="阵列特征"><svg><use href="#patd"/></svg></button><button class="b" aria-label="阵列几何"><svg><use href="#patb"/></svg></button><button class="b" aria-label="镜像"><svg><use href="#mir"/></svg></button><button class="b" aria-label="合并"><svg><use href="#bool"/></svg></button><button class="d" aria-label="更多"></button><button class="b" aria-label="组合"><svg><use href="#comb"/></svg></button><button class="b" aria-label="修剪片体"><svg><use href="#trim"/></svg></button><button class="b" aria-label="拆分体"><svg><use href="#split"/></svg></button><button class="b" aria-label="修剪体"><svg><use href="#arch"/></svg></button><button class="b" aria-label="缠绕"><svg><use href="#tube"/></svg></button><i class="s"></i>
    <button class="b" aria-label="边倒圆"><svg><use href="#eb"/></svg></button><button class="b" aria-label="面倒圆"><svg><use href="#fb"/></svg></button><button class="b" aria-label="倒斜角"><svg><use href="#chm"/></svg></button><button class="b" aria-label="拔模"><svg><use href="#drf"/></svg></button><button class="b" aria-label="球形拐角"><svg><use href="#ball"/></svg></button><button class="d low" aria-label="工具栏选项"></button>
  </div>
  <div class="tb"><i class="grip"></i>
    <button class="b" aria-label="移动面"><svg><use href="#s1"/></svg></button><button class="d" aria-label="更多"></button><button class="b" aria-label="调整圆角"><svg><use href="#s2"/></svg></button><button class="d" aria-label="更多"></button><button class="b" aria-label="删除面"><svg><use href="#s3"/></svg></button><button class="b" aria-label="复制面"><svg><use href="#s4"/></svg></button><button class="d" aria-label="更多"></button><button class="b" aria-label="设为共面"><svg><use href="#s5"/></svg></button><button class="d" aria-label="更多"></button><button class="b" aria-label="线性尺寸"><svg><use href="#s6"/></svg></button><button class="d" aria-label="更多"></button><button class="b" aria-label="组合面"><svg><use href="#s7"/></svg></button><button class="b" aria-label="壳单元"><svg><use href="#s8"/></svg></button><button class="b" aria-label="移动边"><svg><use href="#s9"/></svg></button><button class="d" aria-label="更多"></button><button class="d low" aria-label="工具栏选项"></button>
  </div>
  <div class="tb"><i class="grip"></i>
    <button class="b" aria-label="直纹"><svg><use href="#f1"/></svg></button><button class="b" aria-label="曲线网格"><svg><use href="#f2"/></svg></button><button class="b" aria-label="剖切曲面"><svg><use href="#f3"/></svg></button><button class="b" aria-label="X型"><svg><use href="#f4"/></svg></button><button class="b" aria-label="曲线"><svg><use href="#f5"/></svg></button><button class="b" aria-label="延伸"><svg><use href="#f6"/></svg></button><button class="b" aria-label="曲面"><svg><use href="#f7"/></svg></button><button class="d" aria-label="更多"></button><button class="d low" aria-label="工具栏选项"></button>
  </div>
</div>

<div class="row">
  <div class="tb"><i class="grip"></i><button class="b" aria-label="装配"><svg><use href="#asm"/></svg></button><button class="d more" aria-label="更多装配"></button></div>
  <div class="tb"><i class="grip"></i>
    <button class="b" aria-label="草图"><svg><use href="#skt"/></svg></button><button class="b fin" disabled><svg><use href="#flag"/></svg>完成草图</button><button class="b" aria-label="轮廓"><svg><use href="#prof"/></svg></button><button class="b" aria-label="直线"><svg><use href="#line"/></svg></button><button class="b" aria-label="圆弧"><svg><use href="#arc"/></svg></button><button class="b" aria-label="圆"><svg><use href="#circ"/></svg></button><button class="b" aria-label="圆角"><svg><use href="#fil"/></svg></button><button class="b" aria-label="倒角"><svg><use href="#cha"/></svg></button><button class="b" aria-label="矩形"><svg><use href="#rect"/></svg></button><button class="b" aria-label="样条"><svg><use href="#spl"/></svg></button><button class="b" aria-label="点"><svg><use href="#plus"/></svg></button><button class="b" aria-label="偏置曲线"><svg><use href="#offs"/></svg></button><button class="d" aria-label="更多"></button><i class="s"></i>
    <button class="b" aria-label="快速修剪"><svg><use href="#tr1"/></svg></button><button class="b" aria-label="快速延伸"><svg><use href="#tr2"/></svg></button><button class="b" aria-label="制作拐角"><svg><use href="#tr3"/></svg></button><i class="s"></i><button class="b" aria-label="快速尺寸"><svg><use href="#adim"/></svg></button><button class="d" aria-label="更多"></button><i class="s"></i>
    <button class="b" aria-label="几何约束"><svg><use href="#cons"/></svg></button><button class="b" aria-label="设为对称"><svg><use href="#sym"/></svg></button><button class="b" aria-label="显示约束"><svg><use href="#dcon"/></svg></button><button class="d" aria-label="更多"></button><button class="d more" aria-label="更多草图"></button>
  </div>
  <div class="tb"><i class="grip"></i><button class="b" aria-label="齿轮一"><svg><use href="#pr1"/></svg></button><button class="b" aria-label="齿轮二"><svg><use href="#pr2"/></svg></button><button class="b" aria-label="选择列表"><svg><use href="#hand"/></svg></button><button class="d low" aria-label="更多"></button></div>
  <div class="tb"><i class="grip"></i><button class="b" aria-label="圆柱弹簧"><svg><use href="#sp1"/></svg></button><button class="b" aria-label="拉伸弹簧"><svg><use href="#sp2"/></svg></button><button class="b" aria-label="碟簧"><svg><use href="#ring"/></svg></button><i class="s"></i><button class="b" aria-label="删除弹簧"><svg><use href="#spx"/></svg></button><button class="d low" aria-label="更多"></button></div>
  <div class="tb"><i class="grip"></i><button class="b" aria-label="三角"><svg><use href="#tri"/></svg></button><button class="b" aria-label="表格"><svg><use href="#tab"/></svg></button><button class="b" aria-label="点集"><svg><use href="#folp"/></svg></button><button class="b" aria-label="孔集"><svg><use href="#folo"/></svg></button><button class="b" aria-label="注释"><svg><use href="#note"/></svg></button><button class="b" aria-label="格式刷"><svg><use href="#brush"/></svg></button><i class="s"></i><button class="b fit"><svg viewBox="0 0 24 12"><use href="#bin" width="24" height="24"/></svg><span>10<em>H7</em></span></button><button class="d low" aria-label="更多"></button></div>
  <div class="tb"><i class="grip"></i><button class="b" aria-label="锁定组件"><svg><use href="#gold"/></svg></button><button class="b" aria-label="解锁组件"><svg><use href="#gold"/></svg></button><button class="d low" aria-label="更多"></button></div>
</div>

<div class="row">
  <div class="tb"><i class="grip"></i><button class="b" aria-label="检查"><svg><use href="#chk"/></svg></button><button class="b" aria-label="树列表"><svg><use href="#tl"/></svg></button><button class="b" aria-label="表格属性"><svg><use href="#tp"/></svg></button><button class="b" aria-label="坐标"><svg><use href="#cs3"/></svg></button><button class="d low" aria-label="更多"></button></div>
  <div class="tb"><i class="grip"></i><button class="b" aria-label="尺寸"><svg><use href="#lsh"/></svg></button><i class="s"></i>
    <button class="b n">1.00</button><button class="b n">1.00<small>±.05</small></button><button class="b n">1.00<small>+.05</small><small>−.02</small></button><button class="b n">1.00<small>+.05</small><small class="g">−.00</small></button><button class="b n">1.00<small class="g">+.00</small><small>−.02</small></button><button class="b n"><span class="bx">1.00</span></button><button class="b n"><span><em>(</em>1.00<em>)</em></span></button><button class="b n bl">10H7</button><button class="b n bl">10H7<small>(10.01)</small><small>10</small></button><button class="b n bl">10H7<small>(0.015)</small><small>0</small></button><button class="b n bl">10<small>(0.015)</small><small>0</small></button><i class="s"></i>
    <button class="b rad"><svg class="rs" viewBox="0 0 24 24"><use href="#r1"/><text class="rt" transform="translate(5 14) rotate(-45)">R(Ø)</text></svg></button><button class="b rad"><svg class="rs" viewBox="0 0 24 24"><use href="#r2"/><text class="rt" x="7" y="11">R(Ø)</text></svg></button><i class="s"></i><button class="b" aria-label="直径一"><svg><use href="#d1"/></svg></button><button class="b" aria-label="直径二"><svg><use href="#d2"/></svg></button><button class="b" aria-label="返回"><svg><use href="#teal"/></svg></button><button class="d low" aria-label="更多"></button>
  </div>
</div>
</div>

<div class="sel">
  <span class="combo"><select aria-label="类型过滤器"><option>实体</option></select><i></i></span>
  <span class="combo wide"><select aria-label="选择范围"><option>仅在工作部件内</option></select><i></i></span>
  <button class="q" aria-label="过滤"><svg><use href="#q1"/></svg></button><i class="s"></i><button class="q" aria-label="重置"><svg><use href="#q2"/></svg></button><button class="q" aria-label="捕捉过滤"><svg><use href="#q3"/></svg></button><button class="d" aria-label="更多"></button><button class="q" aria-label="恢复"><svg><use href="#q4"/></svg></button><button class="q" aria-label="历史"><svg><use href="#q5"/></svg></button><i class="s"></i><button class="q" aria-label="框选"><svg><use href="#q6"/></svg></button><button class="d" aria-label="更多"></button><i class="s"></i><button class="q on" aria-label="面选择"><svg><use href="#q7"/></svg></button><button class="q" aria-label="体选择"><svg><use href="#q8"/></svg></button><i class="s"></i>
  <span class="combo wide rule"><select aria-label="体规则"><option>单个体</option></select><i></i></span>
  <button class="q" aria-label="曲面规则"><svg><use href="#q9"/></svg></button><button class="q" aria-label="前进"><svg><use href="#q10"/></svg></button><i class="s"></i>
  <button class="q" aria-label="启用捕捉"><svg><use href="#p1"/></svg></button><button class="q" aria-label="端点"><svg><use href="#p2"/></svg></button><button class="q" aria-label="中点"><svg><use href="#p3"/></svg></button><button class="q" aria-label="控制点"><svg><use href="#p4"/></svg></button><button class="q" aria-label="极点"><svg><use href="#p5"/></svg></button><button class="q" aria-label="交点"><svg><use href="#p6"/></svg></button><button class="q" aria-label="圆心"><svg><use href="#p7"/></svg></button><button class="q" aria-label="象限点"><svg><use href="#p8"/></svg></button><button class="q" aria-label="现有点"><svg><use href="#p9"/></svg></button><button class="q" aria-label="曲线上的点"><svg><use href="#p10"/></svg></button><button class="q" aria-label="面上的点"><svg><use href="#p11"/></svg></button><i class="s"></i><button class="q" aria-label="栅格"><svg><use href="#p12"/></svg></button>
  <button class="d low end" aria-label="工具栏选项"></button>
</div>

<main>
  <aside class="res">
    <button class="gear" aria-label="资源条选项"><svg><use href="#gear"/></svg></button>
    <button class="tab" aria-label="装配导航器"><svg viewBox="0 0 24 24"><path d="M2 4l4-3 4 2v6l-4 2-4-2zM7 7l4-2 3 2v5l-4 2-3-2z" fill="#ffd030" stroke="#b07800"/><path d="M14 12h8" stroke="#111" stroke-width="1.500"/><path d="M5 14v8M5 18h6" stroke="#2038b0" stroke-width="1.500"/><path d="M13 17l4-2 4 2v4l-4 2-4-2z" fill="#ffd030" stroke="#b07800"/></svg></button>
    <button class="tab" aria-label="约束导航器"><svg viewBox="0 0 24 24"><path d="M4 0l7 5-7 5zM20 0l-7 5 7 5z" fill="#1420d0"/><path d="M12 0v24" stroke="#222" stroke-dasharray="3 2"/><path d="M1 14h9v9H1z" fill="#ffe840" stroke="#222"/><path d="M14 14l9 9h-9z" fill="#d01010" stroke="#222"/></svg></button>
    <button class="tab act" aria-label="部件导航器"><svg viewBox="0 0 24 24"><path d="M2 3q4-2 9 0v8q-5 2-9 0z" fill="#c060a8" stroke="#803070"/><ellipse cx="6" cy="3" rx="4" ry="1.500" fill="#ecc"/><path d="M13 10h9" stroke="#111" stroke-width="1.500"/><path d="M6 14v9M6 18h6" stroke="#2038b0" stroke-width="1.500"/><circle cx="17" cy="19" r="4" fill="none" stroke="#b03080" stroke-width="1.300"/><circle cx="17" cy="19" r="1.500" fill="#b03080"/></svg></button>
    <button class="tab" aria-label="重用库"><svg viewBox="0 0 24 24"><path d="M1 6l4-4h4v17l-3 4H1z" fill="#f09030" stroke="#904000"/><path d="M8 6l4-4h4v17l-3 4H8z" fill="#30b050" stroke="#106020"/><path d="M15 6l4-4h4v17l-3 4h-5z" fill="#3898e8" stroke="#1050a0"/><path d="M3 8v10M10 8v10M17 8v10" stroke="#ffe0a0" stroke-width="1.500"/></svg></button>
    <button class="tab gap" aria-label="HD3D 工具"><svg viewBox="0 0 24 24"><circle cx="9" cy="16" r="7.500" fill="#1878d8" stroke="#0a4890"/><path d="M8 15h2v5M7 20.500h5M8 11.500h2" stroke="#fff" stroke-width="2" fill="none"/><path d="M9 6q8 0 9 10M9 2q12 0 14 13" fill="none" stroke="#4878c0" stroke-width="2.500"/></svg></button>
    <button class="tab gap" aria-label="Web 浏览器"><svg viewBox="0 0 24 24"><path d="M3 1h13l5 5v17H3z" fill="#e8f2ff" stroke="#2858c8" stroke-width="1.500"/><circle cx="12" cy="14" r="5.500" fill="#2a88d0"/><path d="M9 10q-4 4 0 9l2-5zM14 9q5 4 1 9l-2-4z" fill="#40a830"/></svg></button>
    <button class="tab gap" aria-label="历史记录"><svg><use href="#clock"/></svg></button>
    <button class="tab" aria-label="角色"><svg viewBox="0 0 24 24"><path d="M1 1h9v4H1z" fill="#f02010"/><path d="M1 5h9v4H1z" fill="#ff9000"/><path d="M1 9h9v4H1z" fill="#e8f000"/><path d="M1 13h9v4H1z" fill="#10e050"/><path d="M1 17h9v3H1z" fill="#10c8f0"/><path d="M1 20h9v3H1z" fill="#1020f0"/><path d="M12 8l9 14" stroke="#111" stroke-width="3"/><path d="M11 2l1 4 4 1-4 2-1 3-2-3-3-1 3-2z" fill="#fff"/></svg></button>
    <svg class="tear" viewBox="0 0 28 8"><path d="M0 5q5-6 12-2t16 0v3q-8 0-12 1T0 5z" fill="#c8c8c8" stroke="#777"/></svg>
    <div class="scr"><button aria-label="顶部"><svg viewBox="0 0 10 10"><path d="M1 2h8M5 4l4 4H1z" fill="#aaa" stroke="#aaa"/></svg></button><button aria-label="向上"><svg viewBox="0 0 10 10"><path d="M5 3l4 4H1z" fill="#aaa"/></svg></button><button aria-label="向下"><svg viewBox="0 0 10 10"><path d="M5 8l4-4H1z" fill="#333"/></svg></button><button aria-label="底部"><svg viewBox="0 0 10 10"><path d="M5 6l3-4H2zM1 8.500h8" fill="#333" stroke="#333"/></svg></button></div>
  </aside>

  <section class="nav">
    <div class="nh"><h2>部件导航器</h2><button aria-label="最大化"></button></div>
    <div class="box">
      <div class="th">名称 <i></i></div>
      <ul>
        <li><i class="tw first"></i><svg><use href="#clock"/></svg>历史记录模式</li>
        <li><i class="tw p"></i><svg viewBox="0 0 16 16"><path d="M2 5l6-3 5 3v7l-5 3-6-3zM2 5l6 3 5-3M8 8v7M2 9l6 3 5-3" fill="none" stroke="#1a9458" stroke-width="1.200"/><path d="M10 11l5 4" stroke="#e04020" stroke-width="2"/></svg>模型视图</li>
        <li class="cam"><i class="tw p"></i><svg><use href="#tick"/></svg><svg viewBox="0 0 16 16"><path d="M1 5l8-4 5 3v8l-9 2-3-2z" fill="#f8d0c8" stroke="#e02810"/><circle cx="8" cy="8" r="3" fill="#88a8f0" stroke="#1830a0"/><path d="M12 8l3 2v4l-4-1z" fill="#333"/></svg>摄像机</li>
        <li><i class="tw"></i><svg><use href="#fopen"/><path d="M8 1.500h7M8 4.500h7" stroke="#223090"/></svg>用户表达式</li>
        <li><i class="tw p m last"></i><svg><use href="#fopen"/></svg>模型历史记录</li>
        <li class="sub"><i class="tw"></i><input type="checkbox" id="c0" checked><svg viewBox="0 0 16 16"><path d="M3 3l5 3v6l-5-2zM3 10l6-4 3 2-5 4z" fill="#fff" stroke="#333"/><path d="M2 0v5" stroke="#0010d8"/><path d="M9 7l6-3" stroke="#109828" stroke-width="1.500"/><path d="M8 12l6 3" stroke="#d82020" stroke-width="1.500"/></svg><label for="c0">基准坐标系  (0)</label></li>
        <li class="sub"><i class="tw"></i><input type="checkbox" id="c1" checked><svg><use href="#extr"/></svg><label for="c1">拉伸  (1)</label></li>
        <li class="sub"><i class="tw"></i><input type="checkbox" id="c2" checked><svg><use href="#extr"/></svg><label for="c2">拉伸  (2)</label></li>
        <li class="sub"><i class="tw last"></i><input type="checkbox" id="c3" checked><svg><use href="#cyl"/></svg><label for="c3"><b>圆柱  (3)</b></label></li>
      </ul>
      <div class="hs"><button aria-label="向左滚动"><svg viewBox="0 0 8 8"><path d="M6 0v8L2 4z"/></svg></button><span></span><button aria-label="向右滚动"><svg viewBox="0 0 8 8"><path d="M2 0v8l4-4z"/></svg></button></div>
    </div>
    <div class="split"><i></i><b></b><i></i></div>
  </section>

  <section class="view">
    <svg class="scene" viewBox="231 213 1135 493" preserveAspectRatio="xMinYMin slice">
      <g stroke="#6fb863" stroke-width="1" stroke-linejoin="round">
        <path d="M594 240L655 253 705 277 644 264z" fill="#7ccb6f"/>
        <path d="M594 240L644 264 593 455 542 431z" fill="#598f4d"/>
        <path d="M542 431L593 455 668 490 638 599 512 541z" fill="#598f4d"/>
        <path d="M898 307L959 319 1010 343 949 330z" fill="#7ccb6f"/>
        <path d="M898 307C882 362 828 431 744 417 765 437 790 442 813 442 875 441 932 392 949 330z" fill="url(#bore)"/>
        <path d="M644 264L705 277C692 330 705 380 744 417 765 437 790 442 813 442 875 441 932 392 949 330L1010 343 959 534 593 455z" fill="#64a159"/>
        <path d="M593 455L959 534 1033 569 668 490z" fill="#7ccb6f"/>
        <path d="M668 490L1033 569 1004 679 638 599z" fill="#64a159"/>
      </g>
      <path d="M542 431l51 24" stroke="#6fb863"/>
      <path d="M666 477Q681 475 720 485T776 506Q760 510 720 499T666 477z" fill="url(#hole)"/>
      <path d="M849 517Q864 515 903 525T958 546Q942 550 903 539T849 517z" fill="url(#hole)"/>
      <g fill="none" stroke="#c6d0c4" stroke-width="1.300"><path d="M783 621L813 509M753 607L771 543 801 557 858 569 841 633 783 621 753 607zM753 607L810 619 841 633 884 642M753 607L735 598"/></g>
      <path d="M817 494l2 18-8-2z" fill="#0000d8"/><path d="M723 594l12 0-4 7z" fill="#bbb"/><path d="M897 646l-16-6 2 6z" fill="#ddd"/>
      <text x="815" y="492" class="ax" fill="#0000d8">Z</text><text x="716" y="598" class="ax" fill="#ccc">Y</text><text x="898" y="653" class="ax" fill="#c8c8c8">X</text>
      <path d="M954 324L1026 266" stroke="#b8a058"/><circle cx="953" cy="325" r="4.500" fill="#1090e8" stroke="#0860b0"/>
      <g><path d="M271 637l18 3 9 3-6 18-14-2-11-5z" fill="#ccc" stroke="#aaa"/><path d="M289 640l-7 20" stroke="#aaa"/><circle cx="275" cy="659" r="4" fill="#999"/><path d="M277 654l5-22" stroke="#1038e0" stroke-width="2.500"/><path d="M283 628l-4 10h6z" fill="#1038e0"/><path d="M278 659l24 5" stroke="#c82828" stroke-width="1.500"/><path d="M292 660l9 4-9 0z" fill="#c82828"/><path d="M261 652l10 5" stroke="#289838" stroke-width="2"/><text x="280" y="630" class="ax" fill="#1050e8">Z</text><text x="255" y="656" class="ax" fill="#289838">Y</text><text x="301" y="670" class="ax" fill="#d03030">X</text></g>
    </svg>
    <div class="tag"><i></i>目标</div>
    <form class="dlg">
      <div class="dt"><button type="button" aria-label="对话框选项"><svg><use href="#gear"/></svg></button><h2>合并</h2><button type="button" aria-label="重置"><svg viewBox="0 0 16 16"><path d="M5 12h4q4-1 3-5-1-3-4-3" fill="none" stroke="#fff" stroke-width="2.800"/><path d="M1 12l5-4v7z" fill="#fff"/></svg></button><button type="button" aria-label="关闭"><svg viewBox="0 0 16 16"><path d="M3 3l10 10M13 3L3 13" stroke="#fff" stroke-width="3"/></svg></button></div>
      <div class="db">
        <div class="secs">
        <div class="sh"><h3>目标</h3><button type="button" aria-label="折叠目标"><svg viewBox="0 0 14 14"><path d="M2 11l5-8 5 8" fill="none" stroke="#666" stroke-width="2.500"/></svg></button></div>
        <div class="sb"><div class="pick"><svg><use href="#tick"/></svg>选择体  (1)</div><button type="button" class="cube foc" aria-label="选择目标体"><svg><use href="#ocube"/></svg></button></div>
        <div class="sh"><h3>工具</h3><button type="button" aria-label="折叠工具"><svg viewBox="0 0 14 14"><path d="M2 11l5-8 5 8" fill="none" stroke="#666" stroke-width="2.500"/></svg></button></div>
        <div class="sb"><div class="pick hot"><svg viewBox="0 0 16 16"><path d="M9 3v9M5 5l8 5M13 5l-8 5" stroke="#d81010" stroke-width="1.800"/></svg>选择体  (0)</div><button type="button" class="cube hotc" aria-label="选择工具体"><svg><use href="#ocube"/></svg></button></div>
        <div class="sh"><h3>区域</h3><button type="button" aria-label="展开区域"><svg viewBox="0 0 14 14"><path d="M2 3l5 8 5-8" fill="none" stroke="#666" stroke-width="2.500"/></svg></button></div>
        <div class="sh"><h3>设置</h3><button type="button" aria-label="展开设置"><svg viewBox="0 0 14 14"><path d="M2 3l5 8 5-8" fill="none" stroke="#666" stroke-width="2.500"/></svg></button></div>
        <div class="sh"><h3>预览</h3><button type="button" aria-label="展开预览"><svg viewBox="0 0 14 14"><path d="M2 3l5 8 5-8" fill="none" stroke="#666" stroke-width="2.500"/></svg></button></div>
        </div>
        <div class="act-row"><button type="button" disabled>确定</button><button type="button" disabled>应用</button><button type="button">取消</button></div>
      </div>
    </form>
  </section>
</main>

<footer class="status"><span class="msg">选择工具体</span><span class="mid"></span><span class="c1"></span><span class="c2"><svg><use href="#flag"/></svg><svg viewBox="0 0 16 16"><path d="M1 5V1h4M11 1h4v4M15 11v4h-4M5 15H1v-4" fill="none" stroke="#fff" stroke-width="2"/><path d="M4 4h8v8H4z" fill="#fff" stroke="#222"/><path d="M5 6h6v4H5z" fill="#3478e0"/></svg></span><span class="c3"></span></footer>
<div class="task"><i class="orb"></i><i style="--c:#f0a800"></i><i style="--c:#887040"></i><i style="--c:#4888c0"></i><i class="lit" style="--c:#c83048"></i><i class="lit" style="--c:#607860"></i><time>20:20</time><i class="desk"></i></div>

<div class="mark">
  <svg viewBox="0 0 86 98"><path d="M43 2l41 23v47L43 95 2 72V25z" fill="#6b9dd2" stroke="#fff" stroke-width="3"/><path d="M57 10l26 15v47L43 94 23 83V62l20 12 22-13V37q1-16-8-27z" fill="#70c5ea"/><path d="M23 61q-1 19 7 28l-28-17V56q4-14 20-19z" fill="#6b9dd2"/><g fill="none" stroke="#e8f4fb" stroke-width="1.300"><path d="M17 17q18-2 27 7M57 10q10 13 8 28M83 42q-4 14-18 20M43 74q16 7 34 2M23 62q0 17 5 26M2 57q5-15 21-21"/></g><path d="M43 24l22 12v26L43 75 22 62V36z" fill="#fff"/><path d="M43 28l18 10-18 11-18-11z" fill="#6b9dd2"/><path d="M25 38l18 11v21L25 60z" fill="#6b9dd2"/><path d="M61 38L43 49v21l18-10z" fill="#70c5ea"/><path d="M25 38l18 11 18-11M43 49v21" fill="none" stroke="#d8ecf8"/></svg>
  <div><strong>3D世界网</strong><span>WWW.3DSJW.COM</span></div>
</div>
</body>
</html>
```
FILE: styles.css
```css
*{box-sizing:border-box}
html,body{height:100%}
body{margin:0;display:flex;flex-direction:column;overflow:hidden;background:#d2d2d2;color:#111;font:12px/16px "Liberation Sans","Noto Sans CJK SC",sans-serif;position:relative}
button{border:0;padding:0;margin:0;background:none;font:inherit;color:inherit;display:flex;align-items:center;justify-content:center;flex:none}
i,em{font-style:normal}
h1,h2,h3,ul{margin:0;padding:0;list-style:none}
svg{flex:none;display:block}
.defs{position:absolute}
.rt{font:bold 9px "Liberation Sans",sans-serif;fill:#c01010}
svg.rs{overflow:visible}

.title{flex:none;height:26px;padding:3px 2px 0 2px;display:flex;align-items:center;gap:1px;background:linear-gradient(#505358 0 3px,#1c1c1c 3px);color:#fff;border-bottom:1px solid #000}
.title h1{flex:1;font:13px/18px "Noto Sans","Noto Sans CJK SC",sans-serif;padding-left:3px;white-space:pre}
.i20{width:18px;height:18px}
.title strong{font:800 13px/18px "Open Sans","Noto Sans",sans-serif;padding-right:20px}
.w{width:20px;height:19px;margin-left:2px;border:1px solid #6a6a6a;border-radius:3px;background:linear-gradient(#6a6a6a,#333 50%,#222)}
.w svg{width:16px;height:16px}
.w.red{background:linear-gradient(#f08a70,#d83a18 50%,#e85a30);border-color:#f0a090}

.menu{flex:none;height:23px;display:flex;align-items:center;padding-left:2px;background:#e5e5e5;border-bottom:1px solid #bbb}
.i16{width:16px;height:16px;margin:0 5px 0 0}
.menu a{color:#111;text-decoration:none;margin-right:13px;white-space:nowrap;display:flex;align-items:center}
.menu a.far{margin-right:25px}
.menu a span{width:18px;text-align:center;font:12px/16px "Liberation Serif",serif}
.menu a span.gc{width:auto;font:10px/16px "Liberation Mono",monospace}
.mdi{margin-left:auto;padding-right:4px;display:flex;gap:2px}
.mdi button{width:17px;height:17px;border:1px solid #777;border-radius:3px;background:linear-gradient(#fff,#ddd)}
.mdi svg{width:14px;height:14px}

.grip{flex:none;width:6px;height:24px;background:radial-gradient(circle,#999 1px,transparent 1.5px) 0 0/6px 4px}
.bars{flex:none;background:linear-gradient(#e2e2e2,#cacaca)}
.row{display:flex;height:34px}
.tb{display:flex;align-items:center;height:34px;padding:0 1px 0 2px;border-right:1px solid #b4b4b4;border-bottom:1px solid #b4b4b4;box-shadow:inset 0 1px #eee,1px 0 #eee}
.b{width:31px;height:30px}
.b svg{width:24px;height:24px}
.start{width:56px;gap:4px;padding-left:1px;white-space:nowrap}
.d{width:12px;height:30px}
.d::before{content:"";border:3px solid transparent;border-top:4px solid #111;border-bottom:0}
.d.low{padding-top:12px}
.d.more{flex-direction:column;gap:6px}
.d.more::before{content:"»";border:0;font:bold 15px/12px "Liberation Sans",sans-serif}
.d.more::after{content:"";border:3px solid transparent;border-top:4px solid #111;border-bottom:0}
.s{flex:none;width:6px;height:28px;background:linear-gradient(90deg,transparent 2px,#b8b8b8 2px 3px,#f4f4f4 3px 4px,transparent 4px)}
.find{display:flex;align-items:center;width:111px;height:22px;padding:0 3px;background:#fff;border:1px solid #a4a4a4}
.find input{flex:1;min-width:0;border:0;padding:0;background:none;font:inherit;outline:0}
.find input::placeholder{color:#999}
.find svg{width:16px;height:16px}
.fin{width:82px;gap:3px;color:#8c8c8c;white-space:nowrap}
.n{flex-direction:column;font:500 11px/11px Roboto,sans-serif}
.n small{font:bold 9px/9px Roboto,sans-serif;color:#b01020}
.n small.g{color:#999}
.n em{color:#b01020}
.n.bl{color:#1010c0}
.n.bl small{font:500 8px/9px Roboto,sans-serif;color:#1010c0}
.bx{border:1px solid #b01020}
.fit{flex-direction:column;font:bold 10px/12px Roboto,sans-serif}
.fit svg{width:24px;height:12px}
.fit em{color:#b01020}

.sel{flex:none;height:28px;display:flex;align-items:center;padding-left:5px;background:linear-gradient(#b9b9b9,#d9d9d9 60%,#dedede);border-top:1px solid #8e8e8e;border-bottom:2px solid #b0b0b0}
.combo{flex:none;display:flex;width:114px;height:17px;margin-right:8px;border:1px solid #555;border-radius:4px;background:#fff;overflow:hidden}
.combo.wide{width:120px;margin-right:4px}
.combo.rule{margin-left:3px}
.combo select{flex:1;min-width:0;appearance:none;border:0;padding:0;background:#fff;font:12px/15px "Noto Sans CJK SC",sans-serif;color:#111}
.combo i{width:16px;display:flex;align-items:center;justify-content:center;background:linear-gradient(#cfe6fa,#4a9ae0)}
.combo i::before{content:"";border:5px solid transparent;border-top:6px solid #111;border-bottom:0}
.q{width:23px;height:23px}
.q svg{width:16px;height:16px}
.sel .s{width:6px;height:22px}
.q.on{background:#fff;border:1px solid #555;border-radius:2px}
.end{margin-left:auto;margin-right:3px}

main{flex:1;display:flex;min-height:0}
.res{flex:none;width:31px;background:#adadad;border-right:1px solid #777;display:flex;flex-direction:column;align-items:flex-end;overflow:hidden}
.gear{width:31px;height:30px;margin-bottom:15px}
.gear svg{width:15px;height:15px}
.tab{width:25px;height:40px;margin-bottom:2px;border:1px solid #6c6c6c;border-right:0;border-radius:4px 0 0 4px;background:linear-gradient(90deg,#eee,#d2d2d2)}
.tab svg{width:22px;height:22px}
.tab.act{width:28px;height:42px;background:#f0f0f0;margin-bottom:1px}
.tab.gap{margin-top:12px}
.tear{width:28px;height:8px}
.scr{width:24px;margin-top:4px}
.scr button{width:15px;height:14px;margin-bottom:2px;background:#f0f0f0;border:1px solid #888}
.scr svg{width:10px;height:10px}

.nav{flex:none;width:200px;padding:3px 10px 1px 7px;display:flex;flex-direction:column;background:#f0f0f0;border-right:1px solid #777;border-top:1px solid #777}
.nh{display:flex;height:26px;align-items:center;padding:0 4px}
.nh h2{flex:1;font:bold 13px/18px "Noto Sans CJK SC",sans-serif}
.nh button{width:13px;height:11px;border:1px solid #111;border-top-width:2px}
.box{flex:1;display:flex;flex-direction:column;min-height:0;border:1px solid #666;background:#fff;padding:1px}
.th{flex:none;height:17px;padding-left:6px;display:flex;align-items:center;gap:14px;background:linear-gradient(#fafafa,#dfe1e3);border-bottom:1px solid #999}
.th i{border:5px solid transparent;border-bottom:5px solid #111;border-top:0}
.box ul{flex:1;overflow:hidden;background:repeating-linear-gradient(#fff 0 19px,#e2e2e2 19px 20px,#f7f7f7 20px 39px,#e2e2e2 39px 40px)}
.box li{height:20px;display:flex;align-items:center;gap:3px;white-space:pre}
.box li svg{width:16px;height:16px}
.box li.cam{gap:1px}
.box li.sub{padding-left:20px;gap:2px}
.sub svg,.sub label{margin-left:1px}
.box b{font-weight:700}
.tw{position:relative;width:15px;height:20px;flex:none}
.tw::before{content:"";position:absolute;left:8px;top:0;width:8px;height:20px;border-left:1px dotted #888;background:linear-gradient(90deg,#888 50%,transparent 50%) 0 10px/2px 1px repeat-x}
.tw.first::before{top:10px;height:10px;background-position:0 0}
.tw.last::before{height:11px}
.tw.p::after{content:"+";position:absolute;left:4px;top:5px;width:9px;height:9px;border:1px solid #888;border-radius:2px;background:#fff;font:11px/7px "Liberation Sans",sans-serif;text-align:center}
.tw.m::after{content:"−"}
.box input{appearance:none;width:12px;height:12px;margin:0 0 0 2px;border:1px solid #111;background:#fff;display:flex;align-items:center;justify-content:center;flex:none}
.box input:checked::before{content:"";width:5px;height:9px;border:solid #10b030;border-width:0 2px 2px 0;transform:rotate(40deg)}
.hs{flex:none;height:17px;display:flex;align-items:center;background:#f0f0f0}
.hs button{width:18px;height:16px}
.hs svg{width:8px;height:8px}
.hs span{width:63px;height:15px;margin-right:auto;border:1px solid #888;border-radius:2px;background:repeating-linear-gradient(90deg,#555 0 1px,transparent 1px 3px) center/7px 7px no-repeat,linear-gradient(#f8f8f8,#ccc)}
.split{flex:none;height:18px;padding-bottom:4px;display:flex;align-items:center;gap:5px}
.split i{flex:1;height:1px;background:#aaa}
.split b{width:31px;height:6px;border:1px solid #aaa;background:#ddd}

.view{flex:1;min-width:0;position:relative;background:linear-gradient(#b3b4b6,#cdced0 35%,#e2e3e5 70%,#e8e9ea);overflow:hidden}
.scene{width:100%;height:100%}
.ax{font:14px "Liberation Sans",sans-serif}
.tag{position:absolute;left:795px;top:41px;height:23px;width:46px;display:flex;align-items:center;border:1px solid #777;background:#d0d0d0}
.tag i{width:12px;height:21px;margin-right:4px;background:radial-gradient(circle,#999 1px,transparent 1.5px) 2px 5px/4px 4px no-repeat,radial-gradient(circle,#999 1px,transparent 1.5px) 6px 5px/4px 4px no-repeat,radial-gradient(circle,#999 1px,transparent 1.5px) 2px 10px/4px 4px no-repeat,radial-gradient(circle,#999 1px,transparent 1.5px) 6px 10px/4px 4px no-repeat,linear-gradient(90deg,#777,#111)}
.dlg{position:absolute;left:0;top:1px;width:290px;display:flex;flex-direction:column;background:#f0f0f0;border:1px solid #333;border-bottom:8px solid #1c1c1c;border-radius:0 0 7px 7px}
.dt{display:flex;height:20px;background:linear-gradient(#666,#1c1c1c 50%,#111);color:#fff}
.dt h2{flex:1;font:500 13px/19px "Noto Sans CJK SC",sans-serif;padding-left:8px}
.dt button{width:21px;border-right:1px solid #999}
.dt h2~button{border-right:0;border-left:1px solid #999}
.dt svg{width:14px;height:14px}
.db{padding:4px 6px 10px}
.secs{border-right:1px solid #999}
.sh{display:flex;height:23px;background:linear-gradient(#fafafa 50%,#dcdcdc 50%,#e8e8e8);border-bottom:1px solid #999}
.sh h3{flex:1;font:bold 12px/22px "Noto Sans CJK SC",sans-serif;padding-left:6px}
.sh button{width:22px;border-left:1px solid #aaa}
.sh svg{width:13px;height:13px}
.sb{display:flex;height:47px;align-items:center;padding:0 8px 3px 8px;background:#d3d3d3;border-left:1px solid #aaa;box-shadow:inset 0 2px 3px #aaa}
.pick{flex:1;height:31px;display:flex;align-items:center;gap:3px;border-radius:6px;white-space:pre}
.pick svg{width:15px;height:15px}
.hot{background:linear-gradient(90deg,#e2a66c 35%,#d3d3d3)}
.cube{width:30px;height:30px;border:2px solid #666;border-radius:4px;background:#eee}
.cube svg{width:24px;height:24px}
.foc{outline:1px dotted #111;outline-offset:-4px}
.hotc{background:linear-gradient(#ffe0c8,#f89050)}
.act-row{display:flex;justify-content:flex-end;gap:6px;margin-top:3px;padding:5px 10px 0;border-top:1px solid #aaa}
.act-row button{width:53px;height:19px;border:2px solid #777;border-radius:4px;background:linear-gradient(#fff,#e0e0e0);color:#111}
.act-row button:disabled{border-color:#bbb;color:#999}

.status{flex:none;height:22px;display:flex;background:#d8d8d8;border-top:1px solid #f4f4f4;font:bold 13px/18px "Noto Sans CJK SC",sans-serif}
.status span{border-left:1px solid #f4f4f4;box-shadow:-1px 0 #aaa}
.status .msg{flex:0 0 626px;padding-left:3px;border:0;box-shadow:none}
.status .mid{flex:1}
.status .c1{width:20px}
.status .c2{width:75px;display:flex;gap:4px;padding:3px}
.status .c3{width:18px}
.status svg{width:16px;height:16px}
.task{flex:none;height:8px;display:flex;gap:4px;border-top:1px solid #222;background:linear-gradient(90deg,#3c2c24,#241a18 30%,#503828 50%,#1c2018 65%,#38402c 80%,#241810);overflow:hidden}
.task i{width:58px;height:14px;border:1px solid #aaa;background:radial-gradient(ellipse at 50% 80%,var(--c) 30%,#665c54 50%)}
.task i.orb{width:56px;border:0;background:radial-gradient(ellipse at 50% 100%,#6cb0e0 30%,#2c2420 60%)}
.task i.lit{background:radial-gradient(ellipse at 50% 80%,var(--c) 25%,#ddd 40%)}
.task time{margin-left:auto;margin-right:20px;color:#fff;font:bold 12px/16px "Liberation Sans",sans-serif}
.task i.desk{width:14px;background:#778}

.mark{position:absolute;right:8px;bottom:6px;display:flex;align-items:center;gap:9px;color:#70c5ea}
.mark svg{width:86px;height:98px}
.mark div{display:flex;flex-direction:column}
.mark strong{font:bold 46px/68px "Noto Sans CJK SC",sans-serif}
.mark span{font:bold 18px/22px "DejaVu Sans",sans-serif}
.mark strong,.mark span{-webkit-text-stroke:3px #fff;paint-order:stroke fill}
```
